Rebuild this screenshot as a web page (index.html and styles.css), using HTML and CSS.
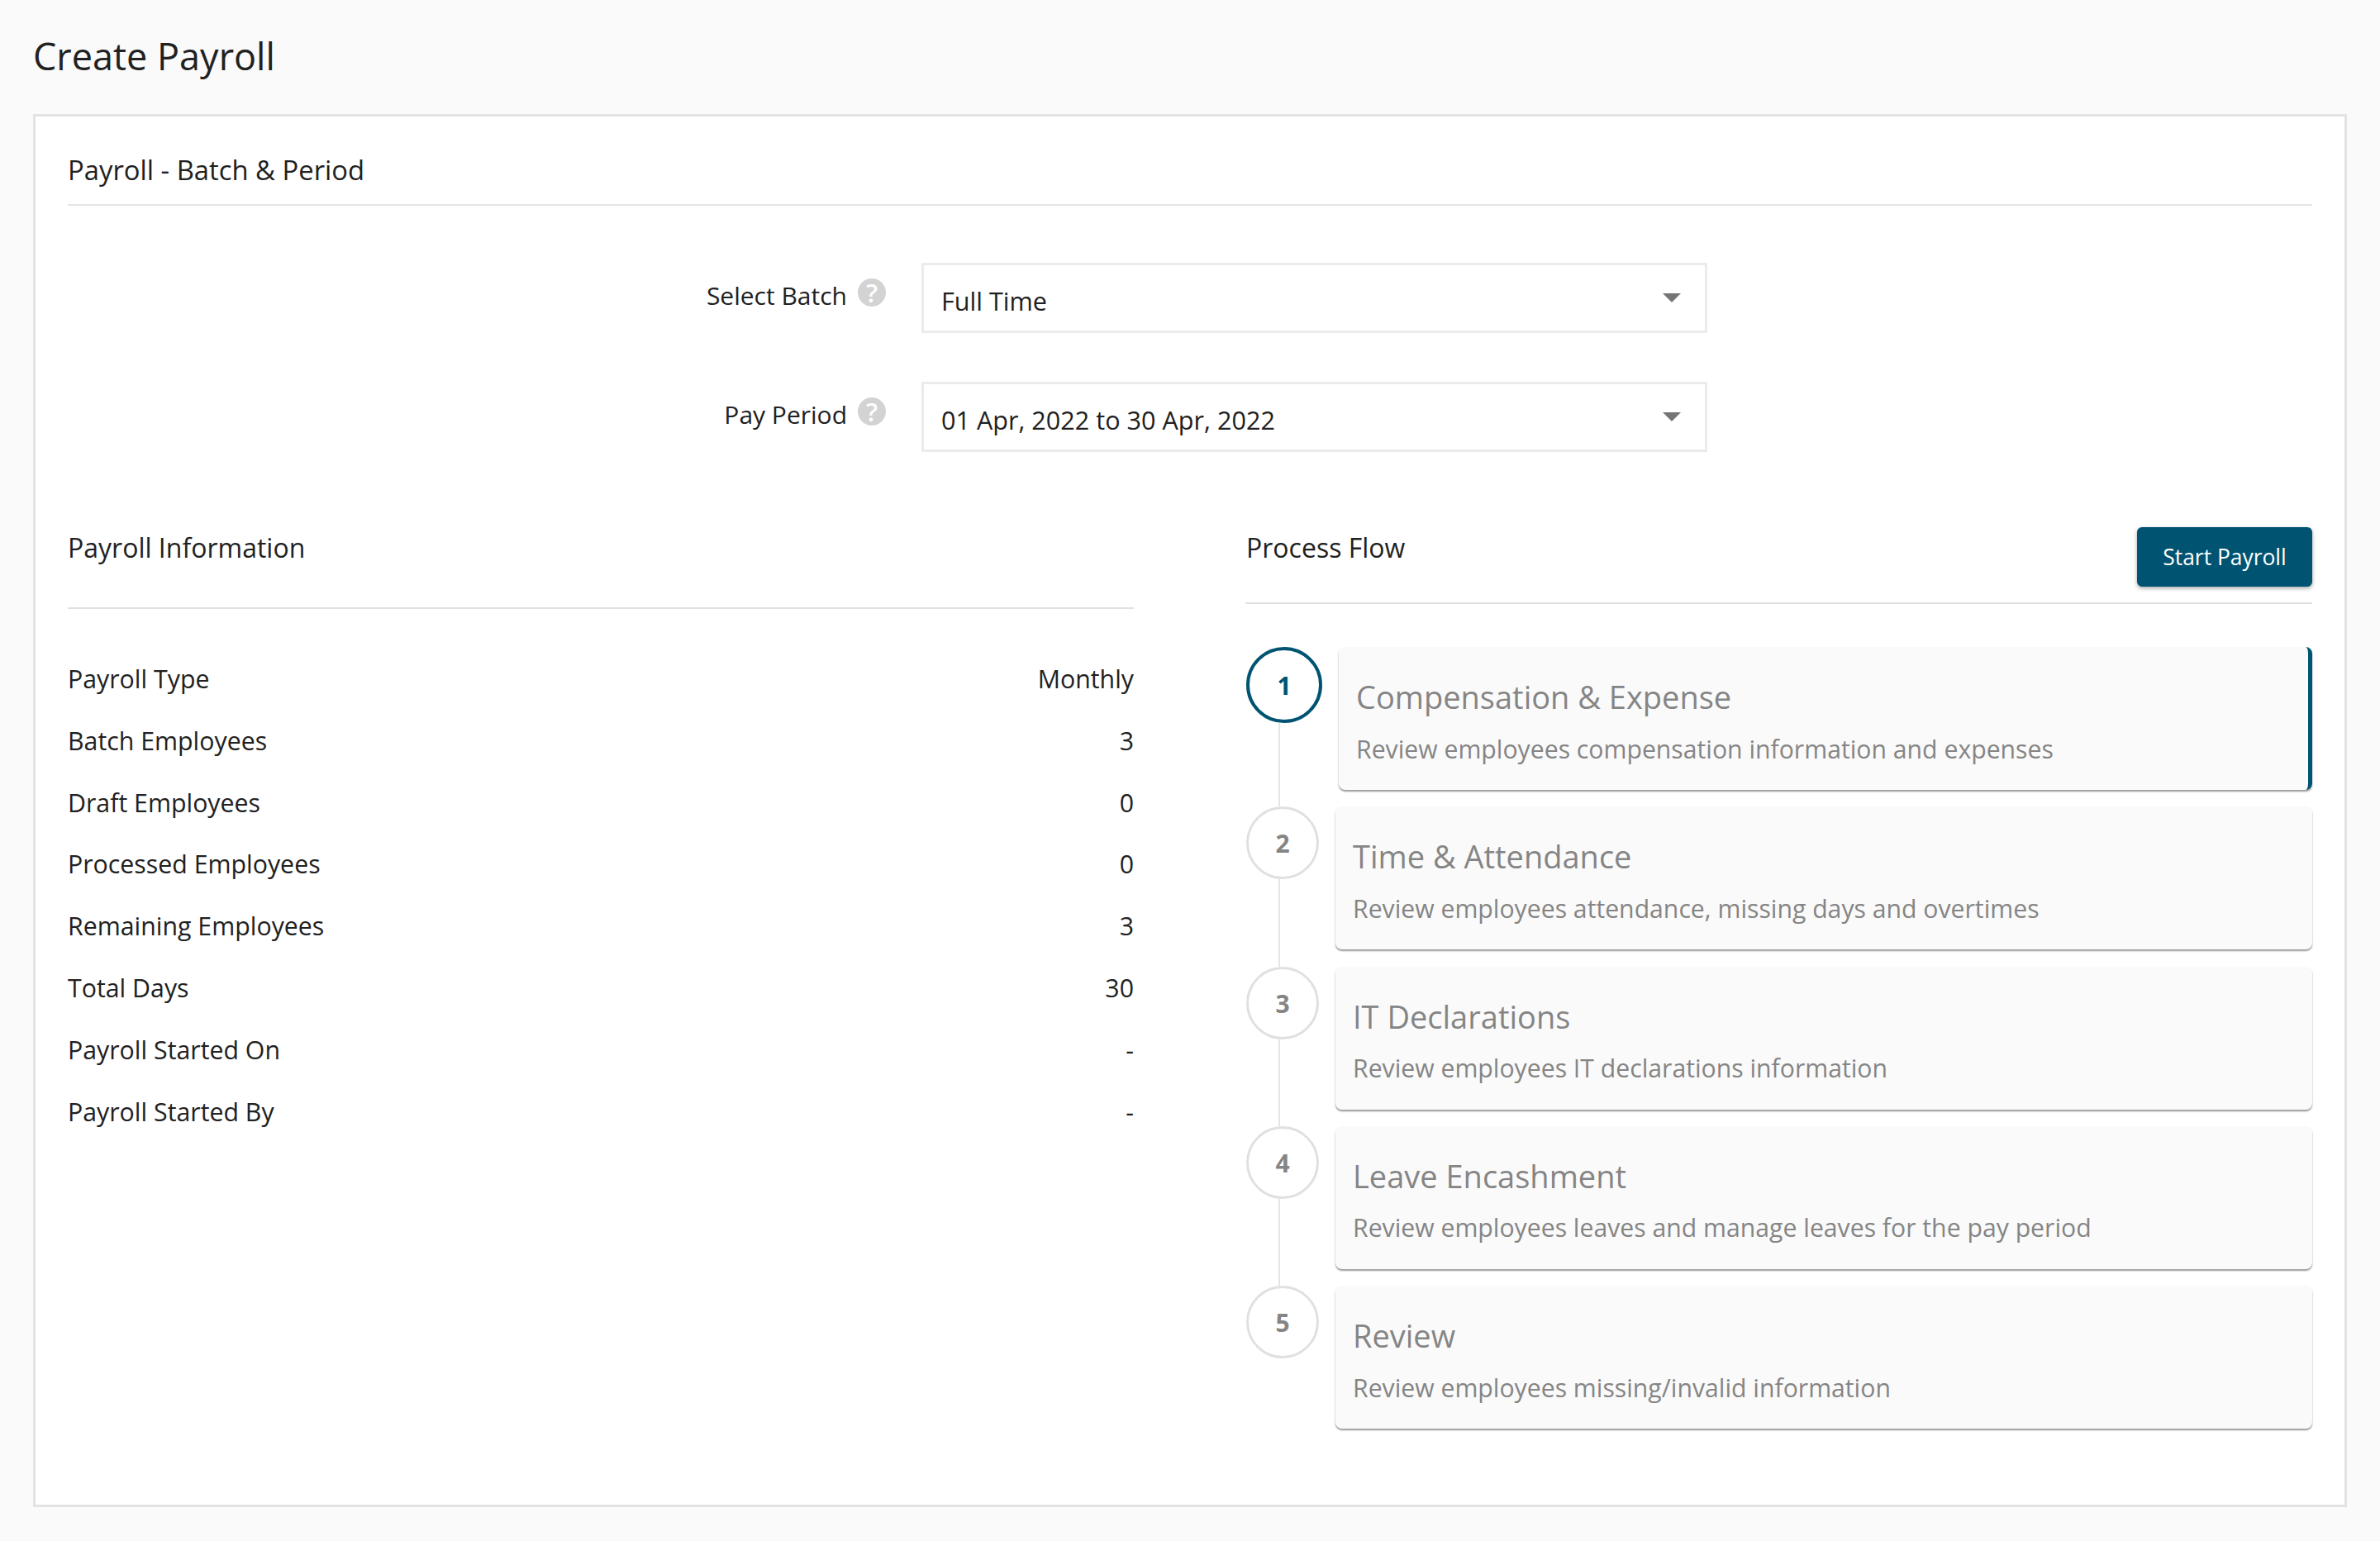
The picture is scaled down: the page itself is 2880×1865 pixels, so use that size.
FILE: index.html
```html
<!DOCTYPE html>
<html lang="en">
<head>
    <meta charset="UTF-8">
    <title>Create Payroll</title>
    <link rel="stylesheet" href="styles.css">
</head>
<body>
    <h1 class="page-title">Create Payroll</h1>

    <div class="panel">
        <h2 class="panel-title">Payroll - Batch &amp; Period</h2>

        <div class="form">
            <div class="form-row">
                <div class="form-label">
                    <span>Select Batch</span>
                    <span class="help">?</span>
                </div>
                <div class="select">
                    <span>Full Time</span>
                    <span class="caret"></span>
                </div>
            </div>
            <div class="form-row">
                <div class="form-label">
                    <span>Pay Period</span>
                    <span class="help">?</span>
                </div>
                <div class="select">
                    <span>01 Apr, 2022 to 30 Apr, 2022</span>
                    <span class="caret"></span>
                </div>
            </div>
        </div>

        <div class="columns">
            <!-- Payroll Information -->
            <div class="column">
                <div class="column-head info-head">
                    <h3>Payroll Information</h3>
                </div>
                <div class="info-list">
                    <div class="info-row"><span>Payroll Type</span><span>Monthly</span></div>
                    <div class="info-row"><span>Batch Employees</span><span>3</span></div>
                    <div class="info-row"><span>Draft Employees</span><span>0</span></div>
                    <div class="info-row"><span>Processed Employees</span><span>0</span></div>
                    <div class="info-row"><span>Remaining Employees</span><span>3</span></div>
                    <div class="info-row"><span>Total Days</span><span>30</span></div>
                    <div class="info-row"><span>Payroll Started On</span><span>-</span></div>
                    <div class="info-row"><span>Payroll Started By</span><span>-</span></div>
                </div>
            </div>

            <!-- Process Flow -->
            <div class="column">
                <div class="column-head flow-head">
                    <h3>Process Flow</h3>
                    <button class="button-primary">Start Payroll</button>
                </div>
                <div class="steps">
                    <div class="step step-active">
                        <div class="step-marker">
                            <div class="step-number">1</div>
                            <div class="step-line"></div>
                        </div>
                        <div class="step-card">
                            <div class="step-title">Compensation &amp; Expense</div>
                            <div class="step-text">Review employees compensation information and expenses</div>
                        </div>
                    </div>
                    <div class="step">
                        <div class="step-marker">
                            <div class="step-number">2</div>
                            <div class="step-line"></div>
                        </div>
                        <div class="step-card">
                            <div class="step-title">Time &amp; Attendance</div>
                            <div class="step-text">Review employees attendance, missing days and overtimes</div>
                        </div>
                    </div>
                    <div class="step">
                        <div class="step-marker">
                            <div class="step-number">3</div>
                            <div class="step-line"></div>
                        </div>
                        <div class="step-card">
                            <div class="step-title">IT Declarations</div>
                            <div class="step-text">Review employees IT declarations information</div>
                        </div>
                    </div>
                    <div class="step">
                        <div class="step-marker">
                            <div class="step-number">4</div>
                            <div class="step-line"></div>
                        </div>
                        <div class="step-card">
                            <div class="step-title">Leave Encashment</div>
                            <div class="step-text">Review employees leaves and manage leaves for the pay period</div>
                        </div>
                    </div>
                    <div class="step">
                        <div class="step-marker">
                            <div class="step-number">5</div>
                        </div>
                        <div class="step-card">
                            <div class="step-title">Review</div>
                            <div class="step-text">Review employees missing/invalid information</div>
                        </div>
                    </div>
                </div>
            </div>
        </div>
    </div>
</body>
</html>
```

FILE: styles.css
```css
body {
    margin: 0;
    padding: 0 40px;
    background: #fafafa;
    color: #212121;
    font-family: "Open Sans", sans-serif;
    font-size: 30.3px;
}
.page-title {
    height: 138px;
    margin: 0;
    font-size: 45px;
    font-weight: 400;
    line-height: 136px;
}
.panel {
    box-sizing: border-box;
    width: 2800px;
    height: 1686px;
    padding: 0 39px;
    background: #fff;
    border: 3px solid #e3e3e3;
}
.panel-title {
    height: 106px;
    margin: 0;
    border-bottom: 2px solid #e5e5e5;
    font-size: 32.8px;
    font-weight: 400;
    line-height: 130px;
}
.form {
    display: flex;
    flex-direction: column;
    gap: 59px;
    margin-top: 69px;
}
.form-row {
    display: flex;
    gap: 43px;
}
.form-label {
    display: flex;
    justify-content: flex-end;
    gap: 13px;
    width: 990px;
    height: 60px;
    font-size: 30px;
    line-height: 79px;
}
.help {
    width: 34px;
    height: 34px;
    margin-top: 19px;
    border-radius: 50%;
    background: #d3d3d3;
    color: #fff;
    font-size: 31px;
    font-weight: 600;
    line-height: 34px;
    text-align: center;
}
.select {
    display: flex;
    align-items: center;
    justify-content: space-between;
    box-sizing: border-box;
    width: 951px;
    height: 85px;
    padding: 6px 29px 0 21px;
    border: 3px solid #ebebeb;
    font-size: 30.6px;
}
.caret {
    width: 0;
    height: 0;
    margin-top: -6px;
    border-left: 11px solid transparent;
    border-right: 11px solid transparent;
    border-top: 11px solid #757575;
}
.columns {
    display: grid;
    grid-template-columns: 1290px 1291px;
    gap: 135px;
    margin-top: 91px;
}
.column-head h3 {
    margin: 0;
    font-size: 32px;
    font-weight: 400;
    line-height: 50px;
}
.info-head {
    height: 97px;
    border-bottom: 2px solid #e0e0e0;
}
.flow-head {
    display: flex;
    justify-content: space-between;
    height: 91px;
    border-bottom: 2px solid #e0e0e0;
}
.flow-head h3 {
    padding-left: 1px;
}
.button-primary {
    width: 212px;
    height: 72px;
    padding: 0;
    border: none;
    border-radius: 6px;
    background: #005472;
    box-shadow: 0 2px 5px rgba(0, 0, 0, 0.35);
    color: #fff;
    font-family: inherit;
    font-size: 26.4px;
}
.info-list {
    margin-top: 48px;
}
.info-row {
    display: flex;
    justify-content: space-between;
    height: 74.8px;
    line-height: 74px;
}
.steps {
    display: flex;
    flex-direction: column;
    margin-top: 52px;
    padding-left: 1px;
}
.step {
    display: flex;
    gap: 20px;
    padding-bottom: 20.3px;
}
.step-marker {
    display: flex;
    flex-direction: column;
    align-items: flex-start;
    margin-bottom: -20.3px;
}
.step-number {
    box-sizing: border-box;
    width: 88px;
    height: 88px;
    border: 3px solid #e0e0e0;
    border-radius: 50%;
    color: #858585;
    font-size: 30px;
    font-weight: 700;
    line-height: 84px;
    text-align: center;
}
.step-line {
    flex: 1;
    width: 2px;
    margin-left: 39px;
    background: #e5e5e5;
}
.step-card {
    flex: 1;
    box-sizing: border-box;
    height: 173px;
    padding: 30px 21px 0;
    border-radius: 8px;
    background: #fafafa;
    box-shadow: 0 2px 2px rgba(0, 0, 0, 0.4);
    color: #858585;
}
.step-title {
    font-size: 38px;
    line-height: 60px;
}
.step-text {
    margin-top: 11.5px;
    font-size: 30.2px;
    line-height: 44px;
}
.step-active .step-number {
    width: 92px;
    height: 92px;
    border: 4px solid #005472;
    color: #005472;
    line-height: 86px;
}
.step-active .step-card {
    border-right: 5px solid #005472;
}
```
